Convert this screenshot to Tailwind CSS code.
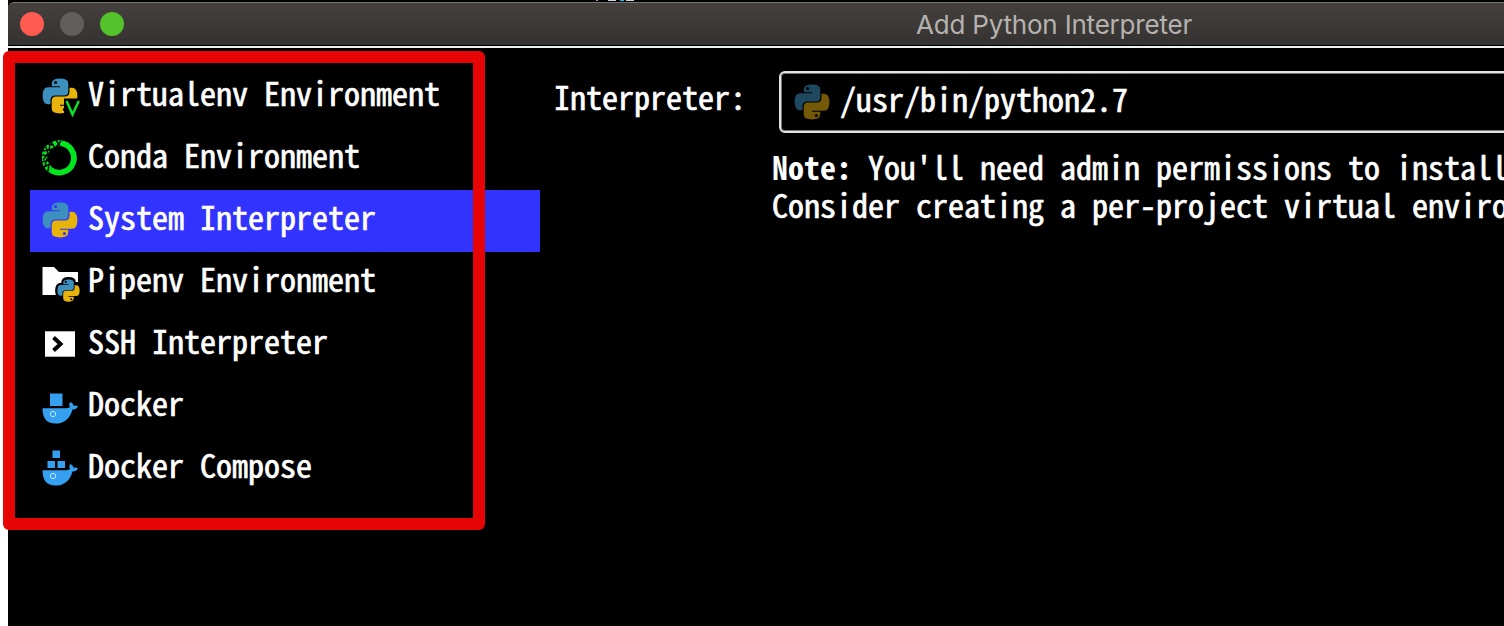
<!DOCTYPE html>
<html lang="en">
<head>
<meta charset="utf-8">
<title>Add Python Interpreter</title>
<script src="https://cdn.jsdelivr.net/npm/@tailwindcss/browser@4"></script>
</head>
<body class="relative h-[626px] w-[1504px] overflow-hidden bg-white pl-2">
<svg class="hidden">
  <symbol id="py" viewBox="0 0 36 36">
    <path fill="#3d8fbd" fill-rule="evenodd" d="M18 8.3H9.8V5.5Q9.8.6 18 .6T26.3 5.5V13Q26.3 17.5 22 17.5H13.5Q8.5 17.5 8.5 22.5V26.3H6Q.6 26.3 .6 17.8Q.6 9.3 6 9.3H18ZM12 4.5a1.6 1.6 0 1 0 3.2 0a1.6 1.6 0 1 0-3.2 0Z"/>
    <path fill="#e8b40c" fill-rule="evenodd" transform="rotate(180 18 18)" d="M18 8.3H9.8V5.5Q9.8.6 18 .6T26.3 5.5V13Q26.3 17.5 22 17.5H13.5Q8.5 17.5 8.5 22.5V26.3H6Q.6 26.3 .6 17.8Q.6 9.3 6 9.3H18ZM12 4.5a1.6 1.6 0 1 0 3.2 0a1.6 1.6 0 1 0-3.2 0Z"/>
  </symbol>
  <symbol id="whale" viewBox="0 0 36 22">
    <path fill="#35a0f0" d="M.5 6.200H24.500Q27.500 6.200 28 4.800Q26.300 2 28.600 0Q31.500 1.500 31.600 3.800Q34 3 36 4.400Q34.500 7.500 30.500 7.400Q26.500 21.500 13.500 21.500Q.5 21.500 .5 6.200Z"/>
    <circle cx="11" cy="12" r="2.700" fill="none" stroke="#bfe2ff" stroke-width="1"/>
  </symbol>
</svg>
<div class="flex h-full w-[1496px] flex-col overflow-hidden bg-black font-['Noto_Sans_Mono_CJK_JP','DejaVu_Sans_Mono',monospace] text-[32px] font-normal whitespace-nowrap text-white">
  <div class="flex h-0.5 shrink-0 pl-[588px]">
    <div class="h-px w-0.5 bg-gray-400"></div><div class="ml-2.5 h-px w-2 bg-gray-300"></div><div class="ml-1 h-px w-1 bg-cyan-400"></div><div class="ml-0.5 h-px w-2 bg-gray-300"></div>
  </div>
  <div class="flex h-[43px] shrink-0 items-center rounded-tl-md border-t border-[#77736f] bg-linear-to-b from-[#45403d] to-[#343231]">
    <div class="flex gap-4 pl-3">
      <div class="size-6 rounded-full bg-[#ff5a52]"></div>
      <div class="size-6 rounded-full bg-[#5f5e5d]"></div>
      <div class="size-6 rounded-full bg-[#54c22b]"></div>
    </div>
    <div class="ml-[792px] font-[Inter,sans-serif] text-[26px] tracking-[-0.2px] text-[#b5b2b0]">Add Python Interpreter</div>
  </div>
  <div class="mt-px h-0.5 shrink-0 bg-[#eef2f0]"></div>
  <div class="flex flex-1 [-webkit-text-stroke:0.7px_#fff]">
    <div class="ml-[22px] w-[510px] shrink-0 pt-[18px]">
      <div class="flex h-[62px] items-center pl-3">
        <svg class="-mt-0.5 h-9 w-[46px] overflow-visible" viewBox="0 0 46 36"><use href="#py" width="36" height="36"/><path d="M22 20.500H40V36H22Z"/><path d="M24.600 23L30.500 36.500L36.800 23" fill="none" stroke="#0be426" stroke-width="2.500"/></svg><div class="mb-2.5 leading-[52px]">Virtualenv Environment</div>
      </div>
      <div class="flex h-[62px] items-center pl-3">
        <svg class="-mt-0.5 h-9 w-[46px]" viewBox="0 0 46 36" fill="none" stroke="#00e61e"><path d="M18 3.200A14.700 14.700 0 1 1 8.200 29.500" stroke-width="5.800"/><path d="M18 3.200A14.700 14.700 0 0 0 8.200 29.500" stroke-width="5.800"/><path d="M19 1L14 7M14 0L18 6M9 2L13 8M6 4L12 5M8 2L7 11M1 11L10 9M4 7L6 14M0 15L7 16M1 20L6 13M0 22L7 20M3 26L5 18M2 27L8 24M6 31L7 24" stroke="#000" stroke-width="1.400"/></svg><div class="mb-2.5 leading-[52px]">Conda Environment</div>
      </div>
      <div class="flex h-[62px] items-center bg-[#3333ff] pl-3">
        <svg class="-mt-0.5 h-9 w-[46px]" viewBox="0 0 46 36"><use href="#py" width="36" height="36"/></svg><div class="mb-2.5 leading-[52px]">System Interpreter</div>
      </div>
      <div class="flex h-[62px] items-center pl-3">
        <svg class="-mt-0.5 h-9 w-[46px] overflow-visible" viewBox="0 0 46 36"><path fill="#fff" d="M.5 3H12L17 8H36V31H.5Z"/><path d="M33 18H37V32H14V30H33Z"/><g transform="translate(15 15) scale(.64)"><path d="M9.800 9V5Q9.800 0 18 0T26.300 5V9.500H31Q36 10 36 18T31 27H26.300V31Q26 36 18 36T9.800 31V26.300H6Q0 26 0 18T6 9Z" stroke="#000" stroke-width="6"/><use href="#py" width="36" height="36"/></g></svg><div class="mb-2.5 leading-[52px]">Pipenv Environment</div>
      </div>
      <div class="flex h-[62px] items-center pl-3">
        <svg class="-mt-0.5 h-9 w-[46px]" viewBox="0 0 46 36"><path fill="#fff" d="M3 5.300H33V30.700H3Z"/><path d="M11.500 11.500L18.500 18L11.500 24.500" fill="none" stroke="#000" stroke-width="4"/></svg><div class="mb-2.5 leading-[52px]">SSH Interpreter</div>
      </div>
      <div class="flex h-[62px] items-center pl-3">
        <svg class="mt-0.5 h-9 w-[46px] overflow-visible" viewBox="0 0 46 36"><path fill="#35a0f0" d="M8 3.500H20.500V16H8Z"/><use href="#whale" y="12" width="36" height="22"/></svg><div class="mb-2.5 leading-[52px]">Docker</div>
      </div>
      <div class="flex h-[62px] items-center pl-3">
        <svg class="mt-0.5 h-9 w-[46px] overflow-visible" viewBox="0 0 46 36"><path fill="#35a0f0" d="M10.500 -1.500H18V6H10.500ZM5.500 9H13V16H5.500ZM15.500 9H23V16H15.500Z"/><use href="#whale" y="12" width="36" height="22"/></svg><div class="mb-2.5 leading-[52px]">Docker Compose</div>
      </div>
    </div>
    <div class="shrink-0 pt-[23px] pl-3.5">
      <div class="flex">
        <div class="w-[225px] leading-[51px]">Interpreter:</div>
        <div class="flex h-[62px] w-[740px] items-center rounded-md border-2 border-[#e4e2e4] pl-[13px] shadow-[inset_0_0_0_1px_#777]">
          <svg class="mr-2.5 size-9 opacity-50"><use href="#py" width="36" height="36"/></svg><div class="mb-[7px] leading-[51px]">/usr/bin/python2.7</div>
        </div>
      </div>
      <div class="mt-3.5 ml-[218px] leading-[38px]"><div><b class="[-webkit-text-stroke:0]">Note:</b> You'll need admin permissions to install</div><div>Consider creating a per-project virtual enviro</div></div>
    </div>
  </div>
</div>
<div class="absolute top-[51px] left-[3px] h-[479px] w-[482px] rounded-md border-12 border-[#e60404]"></div>
</body>
</html>
